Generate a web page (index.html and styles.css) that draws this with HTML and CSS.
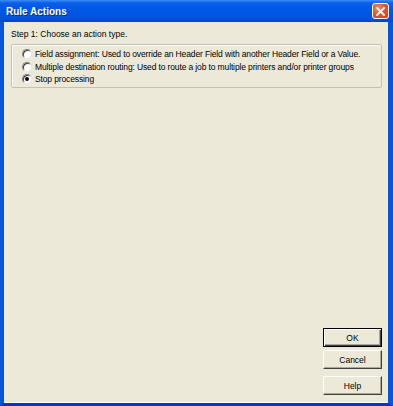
FILE: index.html
```html
<!DOCTYPE html>
<html lang="en">
<head>
    <meta charset="UTF-8">
    <meta name="viewport" content="width=device-width, initial-scale=1.0">
    <title>Rule Actions</title>
    <link rel="stylesheet" href="styles.css">
</head>
<body>
    <div class="window">
        <div class="titlebar">
            <span class="title">Rule Actions</span>
            <button class="close" aria-label="Close">
                <svg width="9" height="9" viewBox="0 0 9 9"><path d="M1 1 L8 8 M8 1 L1 8" stroke="#fff" stroke-width="1.8" stroke-linecap="square"/></svg>
            </button>
        </div>
        <div class="client">
            <div class="step">Step 1: Choose an action type.</div>
            <div class="group">
                <label class="option"><span class="radio"></span>Field assignment: Used to override an Header Field with another Header Field or a Value.</label>
                <label class="option"><span class="radio"></span>Multiple destination routing: Used to route a job to multiple printers and/or printer groups</label>
                <label class="option"><span class="radio checked"></span>Stop processing</label>
            </div>
            <div class="buttons">
                <button class="btn default">OK</button>
                <button class="btn">Cancel</button>
                <button class="btn help">Help</button>
            </div>
        </div>
    </div>
</body>
</html>
```

FILE: styles.css
```css
* { margin: 0; padding: 0; box-sizing: border-box; }
body { font-family: "Liberation Sans", Arial, sans-serif; font-size: 8.5px; color: #000; background: #ece9d8; }
.window { width: 393px; height: 406px; display: flex; flex-direction: column; }
.titlebar { height: 22px; display: flex; align-items: center; justify-content: space-between; padding: 0 4px 0 6px;
    background: linear-gradient(#3d8ef7 0, #0a5ee9 3px, #0058e6 40%, #0053e0 80%, #0045cc 100%); }
.title { color: #fff; font-weight: bold; font-size: 10px; text-shadow: 1px 1px 0 #0a2d8c; }
.close { width: 17px; height: 16px; border: 1px solid #fff; border-radius: 3px; display: flex; align-items: center; justify-content: center;
    background: radial-gradient(circle at 35% 30%, #f08a6a 0, #e25a34 45%, #c83d18 100%); }
.client { flex: 1; display: flex; flex-direction: column; padding: 6px 6px 8px 7px;
    border-left: 4px solid #0855dd; border-right: 5px solid #0855dd; border-bottom: 3px solid #0831d9;
    box-shadow: inset 0 -1px 0 #fffbf0; }
.step { line-height: 12px; }
.group { margin-top: 4px; border: 1px solid #c5c2b2; border-radius: 2px; padding: 3px 0 1px 10px; box-shadow: inset 1px 1px 0 #fff; }
.option { display: flex; align-items: center; height: 12.5px; white-space: nowrap; letter-spacing: -0.13px; }
.radio { width: 10px; height: 10px; border-radius: 50%; margin-right: 3px; background: #fff; position: relative; flex-shrink: 0;
    border: 1px solid; border-color: #808080 #e8e6dc #e8e6dc #808080; box-shadow: inset 1px 1px 0 #404040; }
.radio.checked::after { content: ""; position: absolute; left: 2px; top: 2px; width: 4px; height: 4px; border-radius: 50%; background: #000; }
.buttons { margin-top: auto; display: flex; flex-direction: column; align-items: flex-end; gap: 3px; }
.btn { width: 59px; height: 19px; font-family: inherit; font-size: 8.5px; background: #ece9d8;
    border: 1px solid; border-color: #fff #404040 #404040 #fff; box-shadow: inset -1px -1px 0 #aca899; }
.btn.default { border: 1px solid #000; box-shadow: inset 1px 1px 0 #fff, inset -1px -1px 0 #404040, inset -2px -2px 0 #aca899; }
.btn.help { margin-top: 4px; }
```
